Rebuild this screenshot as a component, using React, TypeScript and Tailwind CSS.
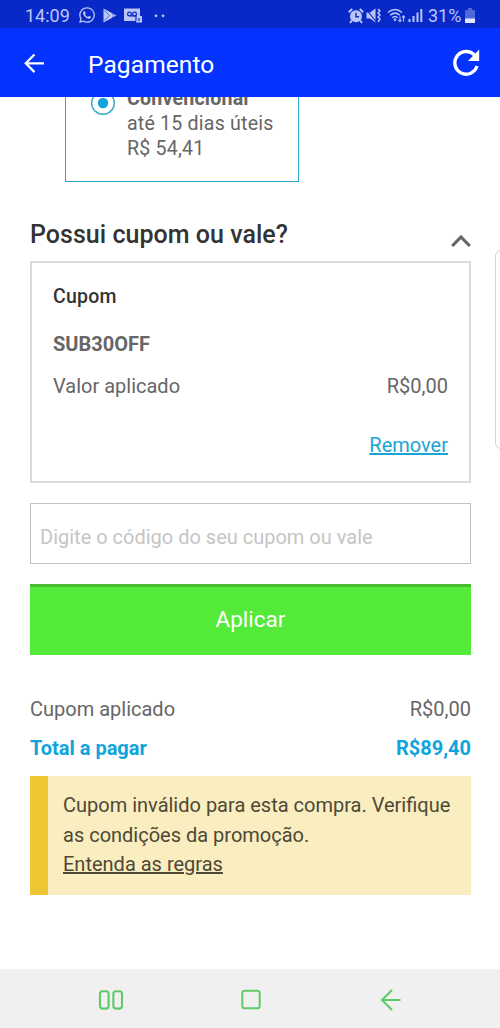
import { FaWhatsapp } from "react-icons/fa";

const StatusBar = () => {
  return (
    <div className="flex h-7 shrink-0 items-center bg-[#0829c8] pt-[3px] pr-[25px] pl-[25px] text-[#b9c6f7]">
      <span className="w-[53px] text-[18px] leading-none">14:09</span>
      <FaWhatsapp className="-mt-px size-[18px]" />
      <svg className="ml-[7px] h-[15px] w-[14px]" viewBox="0 0 14 15">
        <path d="M0.5 0.5 L13.5 7.5 L0.5 14.5 Z" fill="currentColor" />
        <path
          d="M1.5 2.5 L6.5 7.5 L1.5 12.5 M9 5 L11 7.5 L9 10"
          fill="none"
          stroke="#0829c8"
          strokeOpacity="0.7"
          strokeWidth="0.8"
        />
      </svg>
      <svg className="ml-[7px] h-[15px] w-[18px]" viewBox="0 0 18 15">
        <path d="M0 0.5 H16 V8 H18 V14.5 H12 V13 H0 Z" fill="currentColor" />
        <g fill="none" stroke="#0829c8" strokeWidth="1.2">
          <circle cx="5.5" cy="6" r="1.9" />
          <circle cx="10.5" cy="6" r="1.9" />
          <path d="M5.5 8 H12 V13 M15 10 V13" />
        </g>
      </svg>
      <svg className="ml-[12px] h-1 w-[12px]" viewBox="0 0 12 4">
        <circle cx="2" cy="1.8" r="1.4" fill="currentColor" />
        <circle cx="9" cy="1.8" r="1.4" fill="currentColor" />
      </svg>

      <div className="ml-auto flex items-center">
        <svg className="-mr-px h-4 w-4" viewBox="0 0 16 16">
          <circle cx="8" cy="8.3" r="6" fill="currentColor" />
          <path
            d="M8 4.8 V8.8 H11"
            fill="none"
            stroke="#0829c8"
            strokeWidth="1.4"
          />
          <path
            d="M0.8 4.2 L4.2 1 M15.2 4.2 L11.8 1 M3.8 12.5 L2 15 M12.2 12.5 L14 15"
            stroke="currentColor"
            strokeWidth="2"
          />
        </svg>
        <svg className="ml-[3px] h-[15px] w-[15px]" viewBox="0 0 15 15">
          <path d="M0.5 4.5 H4 L9.5 0.5 V14.5 L4 10.5 H0.5 Z" fill="currentColor" />
          <path d="M0 1 L10 13.5" stroke="#0829c8" strokeWidth="1.2" />
          <path
            d="M12 1 L14 3 L12 5 L14 7 L12 9 L14 11 L12 14"
            fill="none"
            stroke="currentColor"
            strokeWidth="1.5"
          />
        </svg>
        <svg
          className="ml-[6px] h-[15px] w-[19px]"
          viewBox="0 0 19 15"
          fill="none"
          stroke="currentColor"
          strokeWidth="1.5"
        >
          <path d="M1 4.5 Q8 -1.5 15 4.5" />
          <path d="M3.2 7.2 Q8 3 12.8 7.2" />
          <path d="M5.3 9.8 Q8 7.2 10.7 9.8" />
          <path d="M8 10 L9.6 11.8 L8 13.5 L6.4 11.8 Z" fill="currentColor" stroke="none" />
          <path
            d="M13 8.5 V13.5 M11.5 12 L13 13.7 L14.5 12 M16.5 13.5 V8 M15 9.5 L16.5 7.8 L18 9.5"
            strokeWidth="1.1"
          />
        </svg>
        <svg className="ml-[2px] h-[15px] w-[15px]" viewBox="0 0 15 15" fill="currentColor">
          <rect x="0.5" y="11" width="2" height="3" />
          <rect x="4.5" y="8" width="2" height="6" />
          <rect x="8.5" y="4.5" width="2" height="9.5" />
          <rect x="12.3" y="1" width="2" height="13" />
        </svg>
        <span className="ml-[5px] w-[37px] text-[18px] leading-none whitespace-nowrap">
          31%
        </span>
        <svg className="h-[15px] w-[10px]" viewBox="0 0 10 15">
          <path d="M3 0 H7 V2 H10 V15 H0 V2 H3 Z" fill="#5068d8" />
          <rect y="10.5" width="10" height="4.5" fill="#e4e9ff" />
        </svg>
      </div>
    </div>
  );
};

const Header = () => {
  return (
    <header className="flex h-[69px] shrink-0 items-center bg-[#0433ff] text-white">
      <svg
        className="ml-6 h-5 w-[21px]"
        viewBox="0 0 21 20"
        fill="none"
        stroke="currentColor"
        strokeWidth="2.2"
      >
        <path d="M20 10.3 H1.8 M10.5 1.5 L1.7 10.3 L10.5 19.1" />
      </svg>
      <h1 className="ml-[43px] pt-[5px] text-[24.5px] leading-none tracking-[0.1px]">
        Pagamento
      </h1>
      <svg className="mr-[20px] ml-auto h-[27px] w-[27px]" viewBox="0 0 27 27">
        <path
          d="M21.5 6.2 A11.3 11.3 0 1 0 24 17"
          fill="none"
          stroke="currentColor"
          strokeWidth="3.4"
        />
        <path d="M26.2 0.5 V12 H15 Z" fill="currentColor" />
      </svg>
    </header>
  );
};

const ShippingOption = () => {
  return (
    <div className="-mt-[30px] ml-[35px] flex h-[115px] w-[234px] border border-[#2ba7d0] pt-[18px] pl-6 text-[#666]">
      <svg className="mt-[4px] h-[26px] w-[26px]" viewBox="0 0 26 26">
        <circle cx="13" cy="13" r="11.3" fill="none" stroke="#2fa6cf" strokeWidth="1.4" />
        <circle cx="13" cy="13" r="5.2" fill="#0fa5dc" />
      </svg>
      <div className="ml-[11px] text-[19.6px] leading-[25px] tracking-[0.2px]">
        <p className="font-bold">Convencional</p>
        <p>até 15 dias úteis</p>
        <p>R$ 54,41</p>
      </div>
    </div>
  );
};

const CouponCard = () => {
  return (
    <section className="h-[222px] border-2 border-[#dadada] px-[21px] pt-[22px] text-[20px] leading-6 text-[#666]">
      <h3 className="text-[19.5px] font-medium tracking-[0.2px] text-[#333]">Cupom</h3>
      <p className="mt-[23px] font-bold">SUB30OFF</p>
      <div className="mt-[18px] flex justify-between">
        <span>Valor aplicado</span>
        <span>R$0,00</span>
      </div>
      <div className="mt-[35px] text-right">
        <a className="text-[#1ba5d2] underline">Remover</a>
      </div>
    </section>
  );
};

const NavigationBar = () => {
  return (
    <nav className="flex h-[59px] shrink-0 items-center bg-[#f0f0f0] pt-[2px] pl-[98px] text-[#60c968]">
      <svg
        className="h-[22px] w-[26px]"
        viewBox="0 0 26 22"
        fill="none"
        stroke="currentColor"
        strokeWidth="2.1"
      >
        <rect x="2" y="2.2" width="8.6" height="17.4" rx="2.5" />
        <rect x="15.4" y="2.2" width="8.6" height="17.4" rx="2.5" />
      </svg>
      <svg
        className="ml-[116px] h-[22px] w-[22px]"
        viewBox="0 0 22 22"
        fill="none"
        stroke="currentColor"
        strokeWidth="2"
      >
        <rect x="2.3" y="1.8" width="17.4" height="17.4" rx="2.5" />
      </svg>
      <svg
        className="ml-[118px] h-[22px] w-[22px]"
        viewBox="0 0 22 22"
        fill="none"
        stroke="currentColor"
        strokeWidth="2"
      >
        <path d="M20.5 11 H2.5 M12 1 L2 11 L12 21" />
      </svg>
    </nav>
  );
};

const App = () => {
  return (
    <div className="relative flex h-[1028px] w-[500px] flex-col overflow-hidden bg-white font-['Roboto','Liberation_Sans',sans-serif]">
      <StatusBar />
      <Header />
      <main className="h-[872px] shrink-0 overflow-hidden pr-[29px] pl-[30px]">
        <ShippingOption />
        <div className="mt-[36px] flex h-[43px] justify-between">
          <h2 className="pt-[2px] text-[25px] leading-[30px] font-medium tracking-[0.03px] text-[#333]">
            Possui cupom ou vale?
          </h2>
          <svg className="mt-[16px] h-[14px] w-5" viewBox="0 0 20 14">
            <path d="M1.2 12 L10 3 L18.8 12" fill="none" stroke="#666" strokeWidth="3.2" />
          </svg>
        </div>
        <CouponCard />
        <input
          className="mt-5 block h-[61px] w-full border border-[#c2c2c2] px-[9px] pt-[6px] text-[20px] placeholder:text-[#c5c5c5]"
          placeholder="Digite o código do seu cupom ou vale"
        />
        <button className="mt-5 block h-[71px] w-full border-t-[3px] border-[#49bd32] bg-[#54ea3a] pb-[3px] text-[22.5px] text-white">
          Aplicar
        </button>
        <div className="mt-[42px] flex justify-between text-[20px] leading-6 text-[#666]">
          <span>Cupom aplicado</span>
          <span>R$0,00</span>
        </div>
        <div className="mt-[15px] flex justify-between text-[20px] leading-6 font-bold text-[#0fa5dc]">
          <span>Total a pagar</span>
          <span>R$89,40</span>
        </div>
        <div className="mt-4 h-[119px] border-l-[18px] border-[#eec633] bg-[#faedc0] pt-[15px] pl-[15px] text-[20px] leading-[29.7px] text-[#4d4936]">
          <p className="whitespace-nowrap">Cupom inválido para esta compra. Verifique</p>
          <p>as condições da promoção.</p>
          <a className="underline">Entenda as regras</a>
        </div>
      </main>
      <div className="absolute top-[250px] -right-[10px] h-[199px] w-[15px] rounded-[6px] border border-[#d4d4d4] bg-white" />
      <NavigationBar />
    </div>
  );
};

export default App;
